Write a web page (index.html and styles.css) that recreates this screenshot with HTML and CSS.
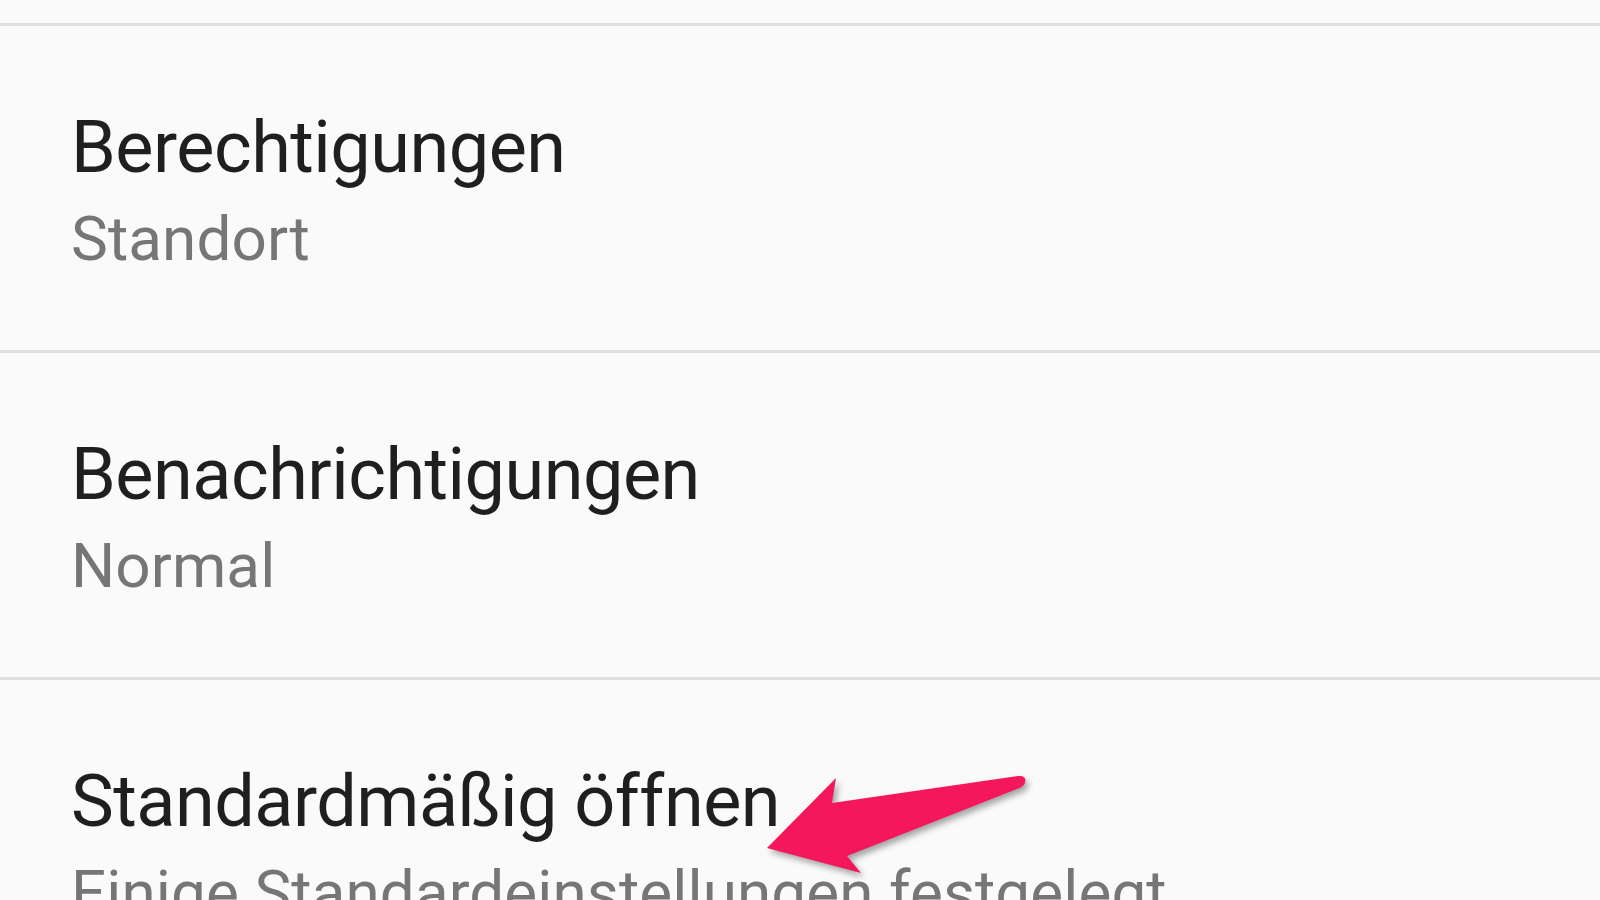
FILE: index.html
```html
<!DOCTYPE html>
<html lang="de">
<head>
  <meta charset="UTF-8">
  <meta name="viewport" content="width=device-width, initial-scale=1.0">
  <title>App-Info</title>
  <link rel="stylesheet" href="styles.css">
</head>
<body>
  <div class="settings">
    <div class="top-edge"></div>
    <div class="pref">
      <div class="pref-title">Berechtigungen</div>
      <div class="pref-summary">Standort</div>
    </div>
    <div class="pref">
      <div class="pref-title">Benachrichtigungen</div>
      <div class="pref-summary">Normal</div>
    </div>
    <div class="pref">
      <div class="pref-title">Standardmäßig öffnen</div>
      <div class="pref-summary">Einige Standardeinstellungen festgelegt</div>
    </div>
  </div>

  <!-- annotation arrow drawn on top of the screenshot -->
  <svg class="arrow" viewBox="0 0 1600 900" width="1600" height="900">
    <path d="M767 848 L836 778 L832 803 L1018 776 Q1027 775 1025 783 Q1023 787 1017 789 L847 856 L861 873 Z" fill="#f5175c"/>
  </svg>
</body>
</html>
```

FILE: styles.css
```css
body {
  margin: 0;
  background-color: #fafafa;
  font-family: Roboto, "Noto Sans", Arial, sans-serif;
  overflow: hidden;
  height: 900px;
}
.settings {
  width: 100%;
}
.top-edge {
  height: 23px;
  border-bottom: 3px solid #dedede;
}
.pref {
  padding: 77px 0 66px 71px;
  border-bottom: 3px solid #dedede;
}
.pref-title {
  font-size: 72px;
  line-height: 90px;
  letter-spacing: -0.5px;
  color: #1f1f1f;
  white-space: nowrap;
}
.pref-summary {
  margin-top: 1px;
  font-size: 62px;
  line-height: 90px;
  letter-spacing: 0.1px;
  color: #767676;
  white-space: nowrap;
}
.arrow {
  position: absolute;
  left: 0;
  top: 0;
  pointer-events: none;
  filter: drop-shadow(3px 4px 3px rgba(0, 0, 0, 0.35));
}
```
